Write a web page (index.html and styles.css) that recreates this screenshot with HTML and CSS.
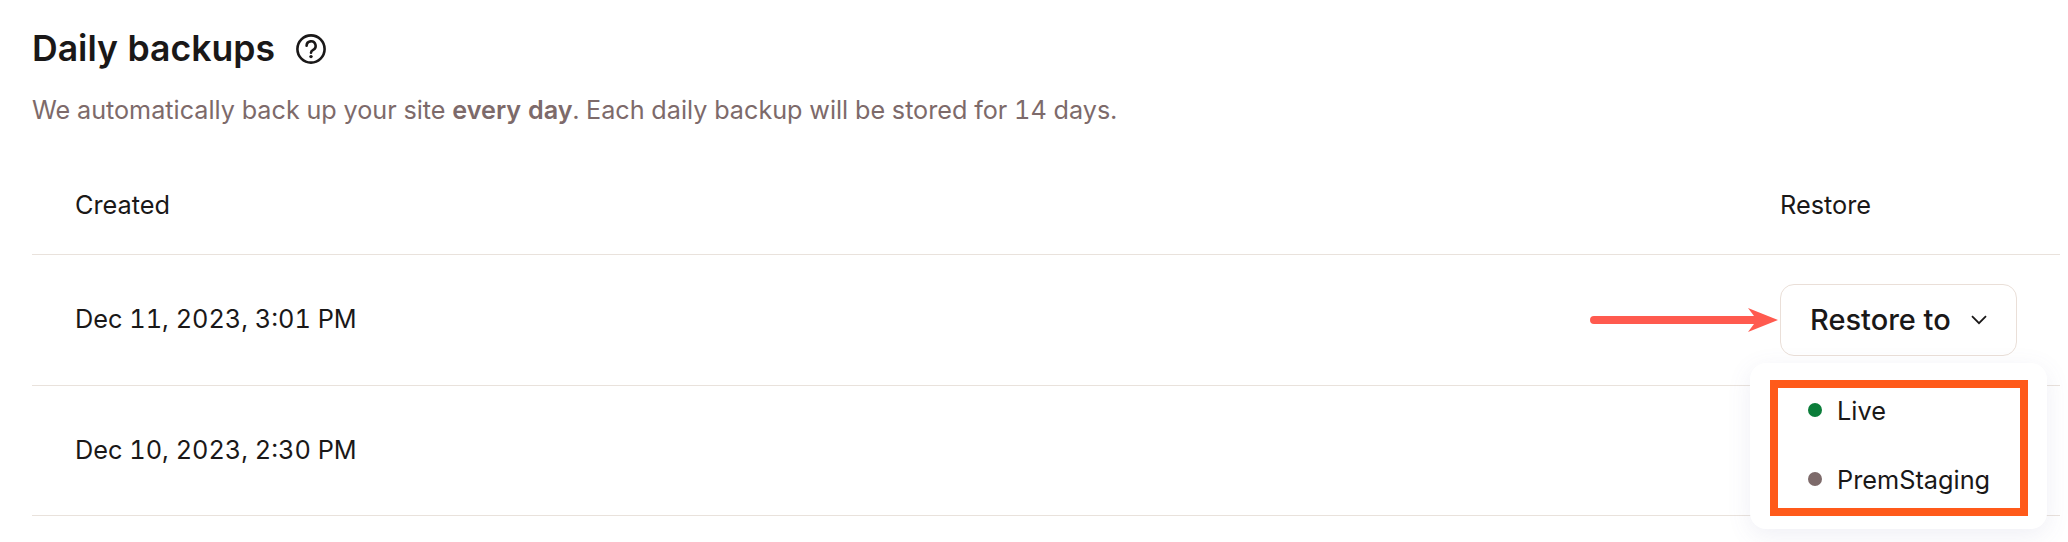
FILE: index.html
```html
<!DOCTYPE html>
<html lang="en">
<head>
    <meta charset="UTF-8">
    <meta name="viewport" content="width=device-width, initial-scale=1.0">
    <title>Daily backups</title>
    <link rel="stylesheet" href="styles.css">
</head>
<body>
    <div class="heading">
        <h2>Daily backups</h2>
        <svg class="help-icon" viewBox="0 0 30 30" fill="none" stroke="#1a1818" stroke-width="2.6">
            <circle cx="15" cy="15" r="13.6"/>
            <path d="M10.6 11.8a4.5 4.5 0 1 1 6.6 4c-1.5.8-2.2 1.5-2.2 3" stroke-linecap="round"/>
            <circle cx="15" cy="22.6" r="1.7" fill="#1a1818" stroke="none"/>
        </svg>
    </div>
    <p class="intro">We automatically back up your site <strong>every day</strong>. Each daily backup will be stored for 14 days.</p>

    <div class="backup-table">
        <div class="row head-row">
            <span>Created</span>
            <span class="restore-col">Restore</span>
        </div>
        <div class="row">
            <span>Dec 11, 2023, 3:01 PM</span>
            <div class="restore-col">
                <svg class="callout-arrow" viewBox="0 0 188 24">
                    <path d="M4 8h160l-6-8 30 12-30 12 6-8H4a4 4 0 0 1 0-8z" fill="#ff5a4f"/>
                </svg>
                <button class="restore-btn">
                    Restore to
                    <svg viewBox="0 0 16 10" fill="none" stroke="#1a1818" stroke-width="1.8">
                        <path d="M1 1.2 8 8.2l7-7"/>
                    </svg>
                </button>
                <div class="menu">
                    <ul class="menu-list">
                        <li><i class="dot live"></i>Live</li>
                        <li><i class="dot staging"></i>PremStaging</li>
                    </ul>
                </div>
            </div>
        </div>
        <div class="row">
            <span>Dec 10, 2023, 2:30 PM</span>
        </div>
    </div>
</body>
</html>
```

FILE: styles.css
```css
* {
    margin: 0;
    padding: 0;
    box-sizing: border-box;
}
body {
    font-family: Inter, "Liberation Sans", sans-serif;
    font-variant-numeric: tabular-nums;
    background-color: #fff;
    color: #1a1818;
    min-height: 100vh;
    padding: 28px 8px 0 32px;
}
.heading {
    display: flex;
    align-items: center;
    gap: 21px;
    height: 42px;
}
.heading h2 {
    font-size: 35.6px;
    font-weight: 600;
    line-height: 42px;
}
.help-icon {
    width: 30px;
    height: 30px;
}
.intro {
    margin-top: 24px;
    font-size: 25.2px;
    line-height: 32px;
    color: #7d6a6a;
}
.intro strong {
    font-weight: 600;
}
.backup-table {
    margin-top: 30px;
}
.row {
    display: flex;
    align-items: center;
    justify-content: space-between;
    height: 130.5px;
    padding-left: 43px;
    font-size: 25.3px;
    border-bottom: 1.5px solid #e9e2dc;
}
.row > span {
    margin-bottom: 2px;
}
.head-row {
    height: 99px;
}
.restore-col {
    position: relative;
    width: 280px;
}
.restore-btn {
    display: flex;
    align-items: center;
    gap: 20px;
    width: 237px;
    height: 72px;
    padding-left: 29px;
    font-family: inherit;
    font-size: 29px;
    font-weight: 500;
    color: #1a1818;
    background-color: #fff;
    border: 1.5px solid #eadfd8;
    border-radius: 14px;
}
.restore-btn svg {
    width: 16px;
    height: 10px;
}
.callout-arrow {
    position: absolute;
    left: -190px;
    top: 24px;
    width: 188px;
    height: 24px;
}
.menu {
    position: absolute;
    left: -30px;
    top: 79px;
    width: 297px;
    height: 166px;
    padding: 17px 19px 13px 20px;
    background-color: #fff;
    border-radius: 16px;
    box-shadow: 0 6px 24px rgba(100, 100, 160, 0.1);
}
.menu-list {
    list-style: none;
    height: 136px;
    border: 8px solid #ff5a1a;
}
.menu-list li {
    display: flex;
    align-items: center;
    gap: 15px;
    height: 69px;
    margin-top: -12px;
    padding-left: 30px;
    font-size: 25.3px;
}
.menu-list li + li {
    margin-top: 0;
}
.dot {
    width: 14px;
    height: 14px;
    border-radius: 50%;
}
.dot.live {
    background-color: #0b7d3a;
}
.dot.staging {
    background-color: #7d6a6a;
}
```
